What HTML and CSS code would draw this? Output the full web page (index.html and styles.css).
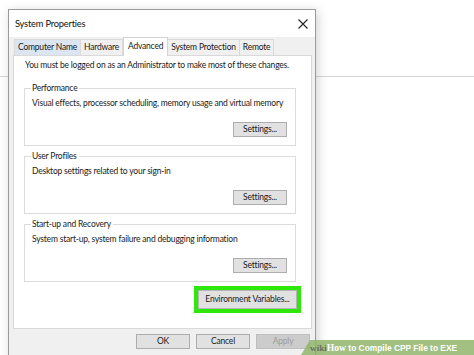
FILE: index.html
```html
<!DOCTYPE html>
<html>
<head>
<meta charset="utf-8">
<link rel="stylesheet" href="styles.css">
</head>
<body>
<div class="dialog">
  <div class="titlebar">
    <span class="title">System Properties</span>
    <svg class="close" width="10" height="10" viewBox="0 0 10 10"><path d="M0.5 0.5 L9.5 9.5 M9.5 0.5 L0.5 9.5" stroke="#222" stroke-width="1.1" fill="none"/></svg>
  </div>
  <div class="body">
    <div class="tabs">
      <div class="tab hover">Computer Name</div>
      <div class="tab">Hardware</div>
      <div class="tab active">Advanced</div>
      <div class="tab">System Protection</div>
      <div class="tab">Remote</div>
    </div>
    <div class="panel">
      <p class="note">You must be logged on as an Administrator to make most of these changes.</p>
      <div class="group">
        <span class="legend">Performance</span>
        <p class="desc">Visual effects, processor scheduling, memory usage and virtual memory</p>
        <div class="row"><button class="btn">Settings...</button></div>
      </div>
      <div class="group">
        <span class="legend">User Profiles</span>
        <p class="desc">Desktop settings related to your sign-in</p>
        <div class="row"><button class="btn">Settings...</button></div>
      </div>
      <div class="group">
        <span class="legend">Start-up and Recovery</span>
        <p class="desc">System start-up, system failure and debugging information</p>
        <div class="row"><button class="btn">Settings...</button></div>
      </div>
      <div class="env-row">
        <div class="highlight"><button class="btn env">Environment Variables...</button></div>
      </div>
    </div>
    <div class="footer">
      <button class="btn foot">OK</button>
      <button class="btn foot">Cancel</button>
      <button class="btn foot disabled">Apply</button>
    </div>
  </div>
</div>
<div class="watermark"><span class="wiki">wiki</span><span class="how">How</span> to Compile CPP File to EXE</div>
</body>
</html>
```
FILE: styles.css
```css
html, body {
  margin: 0;
  padding: 0;
}
body {
  width: 474px;
  height: 355px;
  overflow: hidden;
  position: relative;
  background: linear-gradient(to bottom, #fff 0, #fff 76px, #d4d4d4 76px, #d4d4d4 77px, #fff 77px) no-repeat;
  font-family: Lato, "Liberation Sans", sans-serif;
  font-size: 8.5px;
  letter-spacing: -0.2px;
  color: #1a1a1a;
}
.dialog {
  margin: 9px 0 0 8px;
  width: 306px;
  height: 360px;
  border: 1px solid #9a9a9a;
  background: #f0f0f0;
  box-shadow: 2px 2px 10px rgba(0,0,0,0.18);
  display: flex;
  flex-direction: column;
}
.titlebar {
  height: 27px;
  background: #fff;
  display: flex;
  align-items: center;
  justify-content: space-between;
  padding: 0 7px 0 6px;
}
.title {
  font-size: 9.3px;
  color: #111;
}
.close {
  display: block;
}
.body {
  flex: 1;
  padding: 0 3px 0 4px;
  display: flex;
  flex-direction: column;
}
.tabs {
  display: flex;
  align-items: flex-end;
  height: 18px;
  padding-left: 1px;
}
.tab {
  height: 16px;
  line-height: 15px;
  padding: 0 3px;
  box-sizing: border-box;
  border: 1px solid #dadada;
  border-bottom: none;
  border-left: none;
  background: #f0f0f0;
  white-space: nowrap;
}
.tab:first-child {
  border-left: 1px solid #dadada;
}
.tab.hover {
  background: #dbe6f2;
}
.tab.active {
  height: 19px;
  line-height: 17px;
  padding: 0 4px;
  background: #fff;
  border: 1px solid #d4d4d4;
  border-bottom: none;
  margin-bottom: -1px;
  position: relative;
  z-index: 1;
}
.panel {
  background: #fff;
  border: 1px solid #d9d9d9;
  height: 274px;
  box-sizing: border-box;
  padding: 4px 10px 0 10px;
  display: flex;
  flex-direction: column;
}
.note {
  margin: 0 0 17px 1px;
  line-height: 11px;
  white-space: nowrap;
}
.group {
  margin: 0 5px 10px 0;
  padding: 0 8px 0 6px;
  border: 1px solid #dcdcdc;
  height: 58px;
  box-sizing: border-box;
  display: flex;
  flex-direction: column;
}
.legend {
  display: block;
  width: fit-content;
  margin: -6px 0 0 0;
  padding: 0 2px 0 1px;
  background: #fff;
  line-height: 11px;
}
.desc {
  margin: 4px 0 0 1px;
  line-height: 11px;
  white-space: nowrap;
}
.row {
  display: flex;
  justify-content: flex-end;
  margin-top: 13px;
}
.btn {
  font-family: inherit;
  font-size: 8.5px;
  letter-spacing: -0.2px;
  color: #1a1a1a;
  background: #e1e1e1;
  border: 1px solid #adadad;
  padding: 0;
  height: 15px;
  width: 54px;
  line-height: 13px;
  white-space: nowrap;
}
.env-row {
  display: flex;
  justify-content: flex-end;
  margin-top: -6px;
}
.highlight {
  border: 4px solid #2ee80a;
  background: #2ee80a;
  padding: 0;
}
.btn.env {
  width: 99px;
  height: 19px;
  display: block;
  border: 1px solid #b5b5b5;
}
.footer {
  display: flex;
  justify-content: flex-end;
  gap: 6px;
  padding: 5px 2px 0 0;
}
.btn.foot {
  width: 54px;
  height: 15px;
}
.btn.disabled {
  background: #cccccc;
  border-color: #bfbfbf;
  color: #9d9d9d;
}
.watermark {
  position: absolute;
  left: 301px;
  top: 340px;
  width: 173px;
  height: 15px;
  background: rgba(140, 178, 102, 0.82);
  clip-path: polygon(9px 0, 100% 0, 100% 100%, 0 100%);
  color: #fff;
  font-family: "Liberation Sans", Arial, sans-serif;
  font-weight: bold;
  font-size: 8.4px;
  letter-spacing: 0;
  line-height: 16px;
  padding-left: 9px;
  box-sizing: border-box;
  white-space: nowrap;
}
.watermark .wiki {
  font-family: "Liberation Serif", serif;
  color: #6d6d5a;
  font-size: 9.2px;
}
.watermark .how {
  font-family: "Liberation Serif", serif;
  font-size: 9.6px;
}
```
